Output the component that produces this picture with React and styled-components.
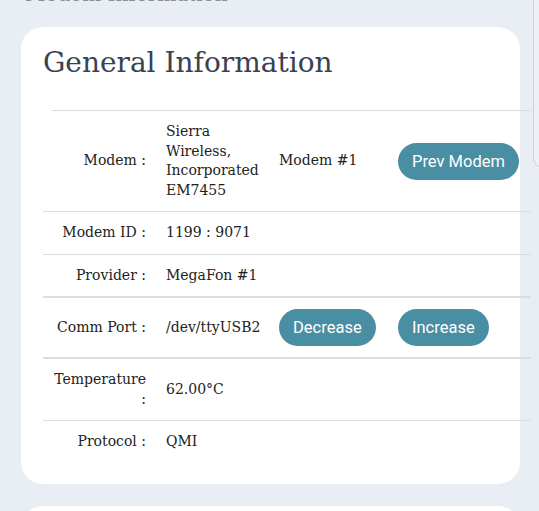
import React from "react";
import styled, { createGlobalStyle } from "styled-components";

const GlobalStyle = createGlobalStyle`
  html, body {
    margin: 0;
    padding: 0;
    background: #e9eef5;
    overflow: hidden;
  }
  body {
    font-family: "DejaVu Serif", "Liberation Serif", serif;
    color: #222;
  }
`;

const rows = [
  {
    label: "Modem :",
    value: "Sierra Wireless, Incorporated EM7455",
    extra: "Modem #1",
    buttons: [null, "Prev Modem"],
  },
  { label: "Modem ID :", value: "1199 : 9071" },
  { label: "Provider :", value: "MegaFon #1" },
  {
    label: "Comm Port :",
    value: "/dev/ttyUSB2",
    buttons: ["Decrease", "Increase"],
    thick: true,
  },
  { label: "Temperature :", value: "62.00°C" },
  { label: "Protocol :", value: "QMI", last: true },
];

const App = () => {
  return (
    <>
      <GlobalStyle />
      <Page>
        <PrevTitle>Modem Information</PrevTitle>
        <Card>
          <Title>General Information</Title>
          <TopRule />
          <InfoTable>
            <colgroup>
              <col style={{ width: 113 }} />
              <col style={{ width: 113 }} />
              <col style={{ width: 119 }} />
              <col style={{ width: 143 }} />
            </colgroup>
            <tbody>
              {rows.map((row) => (
                <Row key={row.label} $thick={row.thick} $last={row.last}>
                  <Label>{row.label}</Label>
                  <Cell>{row.value}</Cell>
                  <Cell>
                    {row.extra}
                    {row.buttons && row.buttons[0] && (
                      <Button>{row.buttons[0]}</Button>
                    )}
                  </Cell>
                  <Cell>
                    {row.buttons && row.buttons[1] && (
                      <Button>{row.buttons[1]}</Button>
                    )}
                  </Cell>
                </Row>
              ))}
            </tbody>
          </InfoTable>
        </Card>
        <NextCard />
        <SidePopup />
      </Page>
    </>
  );
};

const Page = styled.div`
  position: relative;
  display: flow-root;
  height: 511px;
  overflow: hidden;
  padding: 0 19px 0 21px;
  box-sizing: border-box;
`;

const PrevTitle = styled.div`
  margin-top: -18px;
  height: 45px;
  padding-left: 4px;
  font-size: 20px;
  line-height: 24px;
  color: #8a8f98;
  white-space: nowrap;
`;

const Card = styled.div`
  background: #fff;
  border-radius: 22px;
  padding: 14px 0 21px 22px;
  width: 499px;
  box-sizing: border-box;
`;

const Title = styled.h2`
  margin: 0;
  font-weight: 400;
  font-size: 28px;
  line-height: 44px;
  color: #3a4150;
  height: 69px;
`;

const TopRule = styled.div`
  margin-left: 9px;
  width: 479px;
  border-top: 1px solid #dcdcdc;
`;

const InfoTable = styled.table`
  width: 488px;
  table-layout: fixed;
  border-collapse: collapse;
  font-size: 14px;
  line-height: 19.5px;
`;

const Row = styled.tr`
  border-bottom: ${(p) => (p.$last ? "none" : "1px solid #dcdcdc")};
  border-top: ${(p) => (p.$thick ? "2px solid #dcdcdc" : "none")};
  ${(p) => (p.$thick ? "border-bottom: 2px solid #dcdcdc;" : "")}
`;

const Cell = styled.td`
  padding: 11px 10px;
  vertical-align: middle;
  text-align: left;
`;

const Label = styled(Cell)`
  text-align: right;
`;

const Button = styled.button`
  border: none;
  border-radius: 20px;
  background: #4a8ea3;
  color: #fff;
  font-family: Roboto, "Noto Sans", sans-serif;
  font-size: 16.5px;
  height: 37px;
  padding: 0 14px;
  white-space: nowrap;
  cursor: pointer;
`;

const NextCard = styled.div`
  margin-top: 22px;
  width: 499px;
  height: 40px;
  background: #fff;
  border-radius: 22px 22px 0 0;
`;

const SidePopup = styled.div`
  position: absolute;
  top: -12px;
  left: 533px;
  width: 20px;
  height: 180px;
  border: 1px solid #cfd3d9;
  border-radius: 0 0 0 10px;
  background: #edf1f6;
  box-sizing: border-box;
`;

export default App;
